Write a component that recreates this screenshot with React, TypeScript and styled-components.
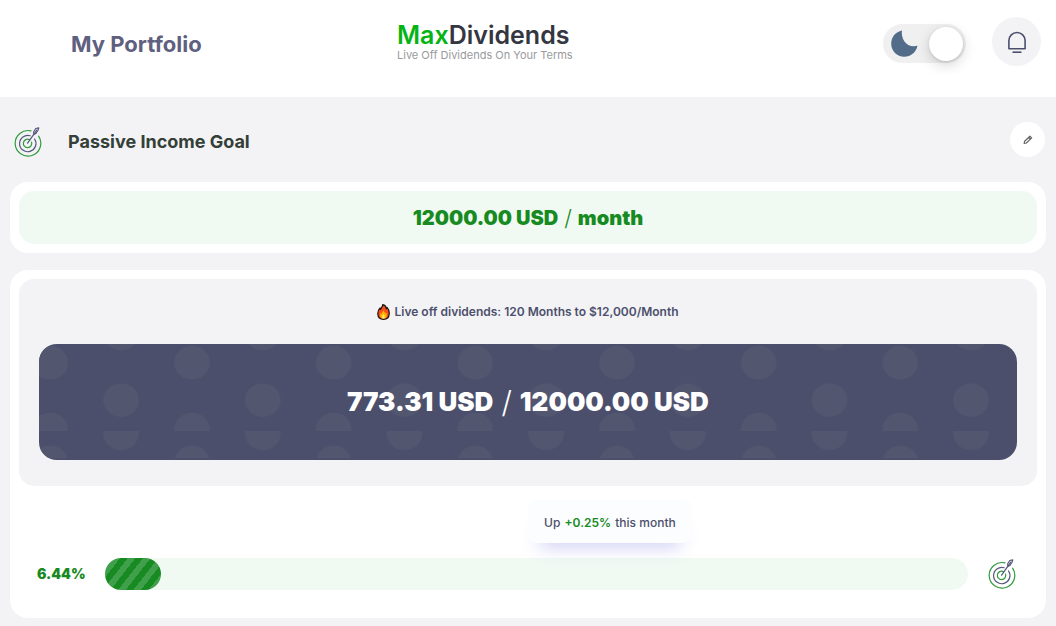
import React from "react";
import styled, { createGlobalStyle } from "styled-components";

const GlobalStyle = createGlobalStyle`
  *, *::before, *::after { box-sizing: border-box; }
  body {
    margin: 0;
    background: #f3f3f6;
    color: #4c4f6b;
    font-family: Inter, "Liberation Sans", sans-serif;
  }
  h1, h2, p { margin: 0; }
  button { border: 0; padding: 0; font: inherit; cursor: pointer; }
`;

const Header = styled.header`
  display: grid;
  grid-template-columns: 1fr 2fr;
  column-gap: 4px;
  align-items: center;
  padding: 17px 15px 31px 71px;
  background: #fff;
`;

const PageTitle = styled.h1`
  color: #5f6080;
  font-size: 22px;
  line-height: 32px;
  font-weight: 700;
  padding-top: 4px;
  white-space: nowrap;
`;

const HeaderRight = styled.div`
  display: flex;
  justify-content: space-between;
  align-items: center;
`;

const Logo = styled.a`
  display: flex;
  flex-direction: column;
  color: #343741;
  text-decoration: none;
  white-space: nowrap;
`;

const LogoName = styled.span`
  font-size: 25px;
  line-height: 26px;
  font-weight: 600;
`;

const LogoAccent = styled.span`
  color: #04b414;
`;

const LogoTagline = styled.span`
  color: #999a9e;
  font-size: 11px;
  line-height: 14px;
`;

const Actions = styled.div`
  display: flex;
  align-items: center;
  gap: 26px;
`;

const Switch = styled.label`
  display: flex;
  align-items: center;
  justify-content: space-between;
  width: 83px;
  height: 39px;
  padding: 0 3px 0 8px;
  border-radius: 20px;
  background: #f0f0f0;
  cursor: pointer;
  margin-top: 4px;
`;

const SwitchInput = styled.input`
  position: absolute;
  opacity: 0;
  width: 1px;
  height: 1px;
  margin: 0;
`;

const SwitchKnob = styled.span`
  width: 34px;
  height: 34px;
  border-radius: 50%;
  background: #fff;
  box-shadow: 0 4px 14px rgba(0, 0, 0, 0.16), 0 1px 3px rgba(0, 0, 0, 0.12);
`;

const RoundButton = styled.button<{ $size: number; $bg: string }>`
  display: grid;
  place-items: center;
  width: ${(p) => p.$size}px;
  height: ${(p) => p.$size}px;
  border-radius: 50%;
  background: ${(p) => p.$bg};
  color: #4c4f6b;
`;

const Main = styled.main`
  padding: 0 10px 8px;
`;

const SectionHead = styled.div`
  display: flex;
  align-items: center;
  justify-content: space-between;
  height: 85px;
  padding: 0 1px 0 4px;
`;

const SectionLabel = styled.div`
  display: flex;
  align-items: center;
  gap: 26px;
  padding-top: 4px;
`;

const SectionTitle = styled.h2`
  color: #344037;
  font-size: 18px;
  line-height: 24px;
  font-weight: 700;
`;

const Card = styled.section`
  padding: 9px;
  border-radius: 18px;
  background: #fff;

  & + & { margin-top: 17px; }
`;

const GoalAmount = styled.p`
  display: flex;
  justify-content: center;
  gap: 6px;
  padding: 13px 12px 12px;
  border-radius: 15px;
  background: #f0faf2;
  color: #178a22;
  font-size: 20px;
  line-height: 28px;
  font-weight: 900;
`;

const Summary = styled.div`
  padding: 21px 20px 26px;
  border-radius: 15px;
  background: #f3f3f6;
`;

const Caption = styled.p`
  display: flex;
  justify-content: center;
  align-items: center;
  gap: 4px;
  margin-bottom: 20px;
  font-size: 12px;
  line-height: 24px;
  font-weight: 600;
`;

const Banner = styled.div`
  position: relative;
  overflow: hidden;
  padding: 38px 20px;
  border-radius: 18px;
  background: #4c4f6b;
  color: #fff;
`;

const BannerPattern = styled.svg`
  position: absolute;
  inset: 0;
  width: 100%;
  height: 100%;
`;

const BannerAmount = styled.p`
  position: relative;
  display: flex;
  justify-content: center;
  gap: 8px;
  font-size: 26px;
  line-height: 40px;
  font-weight: 900;
`;

const Slash = styled.span<{ $size: number }>`
  font-size: ${(p) => p.$size}px;
  font-weight: 300;
`;

const Change = styled.p`
  position: relative;
  width: max-content;
  margin: 14px 0 15px 50%;
  padding: 12px 16px 10px;
  border-radius: 8px;
  background: #fcfdff;
  box-shadow: 0 16px 18px -12px rgba(80, 80, 220, 0.28);
  font-size: 12px;
  line-height: 21px;
  font-weight: 500;
`;

const Gain = styled.strong`
  margin: 0 1px;
  color: #178a22;
  font-weight: 600;
`;

const ProgressRow = styled.div`
  display: flex;
  align-items: center;
  gap: 20px;
  padding: 0 21px 19px 18px;
`;

const Percent = styled.span`
  width: 48px;
  color: #178a22;
  font-size: 14px;
  line-height: 24px;
  font-weight: 900;
  white-space: nowrap;
`;

const Track = styled.div`
  flex: 1;
  height: 32px;
  border-radius: 16px;
  background: #f0faf2;
`;

const Fill = styled.div`
  height: 32px;
  border-radius: 16px;
  background: repeating-linear-gradient(
    128deg,
    #178a22 0 6px,
    #409f4a 6px 12px
  );
`;

const TargetIcon = () => (
  <svg width="28" height="30" viewBox="0 0 28 30" fill="none" aria-hidden="true">
    <g stroke="#2f9a3a" strokeWidth="1.2" strokeLinecap="round">
      <path d="M17 3.9A12.8 12.8 0 1 0 24.6 9.2" />
      <path d="M15.4 12.6A4.2 4.2 0 1 0 17.6 15.2" />
    </g>
    <g stroke="#55577a" strokeWidth="1.2" strokeLinecap="round" strokeLinejoin="round">
      <path d="M16.2 8.7A8.2 8.2 0 1 0 20.600 12" />
      <path d="M13.600 16.200 22.800 3.200" />
      <path d="M19.800 7.400 19.700 4.800 21.800 1.500 24.800.8 24 3.200 21.900 6.500Z" />
    </g>
  </svg>
);

const MoonIcon = () => (
  <svg width="27" height="27" viewBox="0 0 27 27" aria-hidden="true">
    <path d="M11 .4C9.6 8.600 15.600 18.400 26.500 15.800 25 22.500 19.800 26.800 13.200 26.800 6 26.800.2 21 .2 13.800.2 7 4.600 1.600 11 .4Z" fill="#536c8a" />
  </svg>
);

const BellIcon = () => (
  <svg width="20" height="22" viewBox="0 0 20 22" fill="none" stroke="currentColor" strokeWidth="1.6" aria-hidden="true">
    <path d="M1.900 17.800V9.600a8.100 8.100 0 0 1 16.200 0v8.200Z" strokeLinejoin="round" />
    <path d="M5.500 21.200h9" />
  </svg>
);

const PencilIcon = () => (
  <svg width="10" height="10" viewBox="0 0 10 10" fill="none" stroke="#666" strokeWidth="1.200" strokeLinejoin="round" aria-hidden="true">
    <path d="M1.200 8.300 1.600 6.200 6.900 1.200 8.700 2.900 3.400 8ZM5.600 2.400 7.500 4.200" />
  </svg>
);

const FlameIcon = () => (
  <svg width="13" height="16" viewBox="0 0 13 16" aria-hidden="true">
    <path d="M5.800.7C8.200 1 9 2.800 9.300 4.500L10.200 3.600C11.800 5.300 12.400 7.600 12.200 10 12 13.300 9.700 15.300 6.500 15.300S1 13.300.8 10C.7 7.600 1.600 5.500 2.900 4.200L3.600 5.200C4.200 3.500 5.700 2.600 5.800.7Z" fill="#f4511e" stroke="#16120f" strokeWidth="1.200" />
    <path d="M6.400 6.200C7 8 8 8.400 8.600 9.600 9.200 8.900 9.300 8.400 9.300 8.400 10.600 11.400 9.500 14.600 6.500 14.600S2.500 11.800 3.600 9.200L4.500 10C4.600 8.300 6.200 7.600 6.400 6.200Z" fill="#ffb300" />
    <path d="M6.500 10.300C7.900 11.700 8.300 14.600 6.500 14.600S5 11.800 6.500 10.300Z" fill="#fff176" />
  </svg>
);

export default function App() {
  const percent = 6.44;
  return (
    <>
      <GlobalStyle />
      <Header>
        <PageTitle>My Portfolio</PageTitle>
        <HeaderRight>
          <Logo href="#">
            <LogoName>
              <LogoAccent>Max</LogoAccent>Dividends
            </LogoName>
            <LogoTagline>Live Off Dividends On Your Terms</LogoTagline>
          </Logo>
          <Actions>
            <Switch>
              <SwitchInput type="checkbox" role="switch" aria-label="Light theme" defaultChecked />
              <MoonIcon />
              <SwitchKnob />
            </Switch>
            <RoundButton $size={49} $bg="#f3f3f6" aria-label="Notifications">
              <BellIcon />
            </RoundButton>
          </Actions>
        </HeaderRight>
      </Header>
      <Main>
        <SectionHead>
          <SectionLabel>
            <TargetIcon />
            <SectionTitle>Passive Income Goal</SectionTitle>
          </SectionLabel>
          <RoundButton $size={35} $bg="#fff" aria-label="Edit goal">
            <PencilIcon />
          </RoundButton>
        </SectionHead>
        <Card>
          <GoalAmount>
            <span>12000.00 USD</span>
            <Slash $size={22}>/</Slash>
            <span>month</span>
          </GoalAmount>
        </Card>
        <Card>
          <Summary>
            <Caption>
              <FlameIcon />
              Live off dividends: 120 Months to $12,000/Month
            </Caption>
            <Banner>
              <BannerPattern aria-hidden="true">
                <defs>
                  <pattern id="dots" x="11.300" y="-12.800" width="141.670" height="99.800" patternUnits="userSpaceOnUse">
                    <g fill="#53566f">
                      <ellipse cx="0" cy="31.500" rx="17.700" ry="16.700" />
                      <ellipse cx="141.670" cy="31.500" rx="17.700" ry="16.700" />
                      <ellipse cx="0" cy="98.300" rx="17.700" ry="16.700" />
                      <ellipse cx="141.670" cy="98.300" rx="17.700" ry="16.700" />
                      <ellipse cx="70.800" cy="2.300" rx="17.700" ry="16.700" />
                      <ellipse cx="70.800" cy="69" rx="17.700" ry="16.700" />
                    </g>
                  </pattern>
                </defs>
                <rect width="100%" height="114" fill="url(#dots)" />
              </BannerPattern>
              <BannerAmount>
                <span>773.31 USD</span>
                <Slash $size={30}>/</Slash>
                <span>12000.00 USD</span>
              </BannerAmount>
            </Banner>
          </Summary>
          <Change>
            Up <Gain>+0.25%</Gain> this month
          </Change>
          <ProgressRow>
            <Percent>{percent}%</Percent>
            <Track role="progressbar" aria-label="Goal progress" aria-valuenow={percent} aria-valuemin={0} aria-valuemax={100}>
              <Fill style={{ width: `${percent}%` }} />
            </Track>
            <TargetIcon />
          </ProgressRow>
        </Card>
      </Main>
    </>
  );
}
